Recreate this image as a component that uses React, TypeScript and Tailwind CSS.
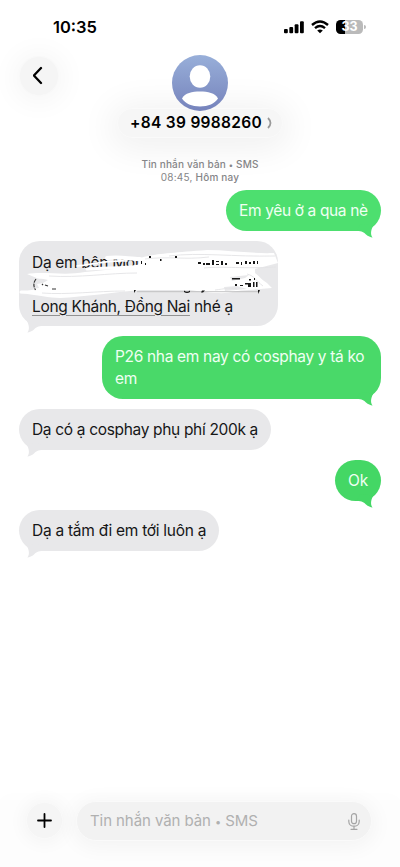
import type { ReactNode } from "react";

type BubbleProps = { side: "in" | "out"; className: string; tail?: string; children: ReactNode };

function Bubble({ side, className, tail = "#e8e8ea", children }: BubbleProps) {
  const out = side === "out";
  return (
    <div
      className={`relative whitespace-nowrap rounded-[21px] px-[13px] py-[9.5px] text-[15.5px] leading-[22px] ${
        out ? "self-end text-[#effff2]" : "self-start bg-[#e8e8ea] text-[#161617]"
      } ${className}`}
    >
      <svg
        className={`absolute -bottom-[7px] ${out ? "right-[7px]" : "left-[7px] -scale-x-100"}`}
        width="20"
        height="16"
        viewBox="0 0 20 16"
      >
        <path d="M3 8.8 C8 9 10 10.5 12 12.5 C14 14.3 16.5 15.3 18.7 15.6 C16.6 13.5 16.2 8.5 19.5 3.5 L6 2 Z" fill={tail} />
      </svg>
      <div className="relative">{children}</div>
    </div>
  );
}

function Scribble() {
  return (
    <svg className="absolute left-0 top-0" width="268" height="85" viewBox="0 0 268 85">
      <path
        d="M8 33 C25 30 45 35 66 31 C90 29 101 27 119 25 L121 17 C134 13 150 12 188 9 C210 9 235 13 255 12 L259 22 L236 28 L236 32 C241 36 243 39 248 42 L253 47 L230 49 C217 49 211 53 198 52 C188 52 181 50 171 49 L121 49 C95 51 65 56 41 57 C30 57 20 54 0 52 L17 48 L13 44 L20 38 Z"
        fill="white"
      />
      <path d="M14 39 C18 37 24 38 29 39 L24 42 L18 43 L20 47 L13 48 Z M211 36 L230 34 L226 37 L213 40Z M205 46 L218 45 L228 48 L206 50Z" fill="#e8e8ea" />
      <g fill="none" stroke="#fff" strokeLinecap="round" strokeLinejoin="round">
        <path d="M88 17 C101 15 110 18 121 18" strokeWidth="4" />
        <path d="M58 25 C72 24 86 19 108 20" strokeWidth="1.7" />
        <path d="M68 28 C86 26 100 28 121 25" strokeWidth="3" />
        <path d="M2 51 C18 51 28 50 45 49" strokeWidth="3" />
      </g>
      <g fill="none" stroke="#e3e3e5" strokeWidth="0.9">
        <path d="M150 15 C180 11 215 16 256 15 M185 27 C205 25 225 28 257 26 M23 52 C48 54 78 50 106 50" />
        <path d="M228 33 C236 35 237 40 244 45 M196 49 C205 48 212 46 218 48 M126 18 C150 15 165 19 190 16 M30 35 C60 37 90 32 118 32" />
        <path d="M118 50.7 H241" stroke="#bcbcbe" />
      </g>
      <g fill="#171717">
        <path d="M130 15h2v2h-2z M141 18h1.5v2h-1.5z M156 15h2v2h-2z M122 20h1v3h-1z M126 22h1v2h-1z" />
        <path d="M179 21h3v2h-3z M184 22h2v2h-2z M187 22h4v2h-4z M193 19h2v5h-2z M197 20h3v1h-3z M197 23h3v1h-3z M202 20h2v4h-2z M206 22h2v2h-2z M217 21h3v2h-3z M222 21h1v3h-1z M226 20h2v3h-2z M230 21h2v2h-2z M234 20h2v3h-2z M238 20h1v3h-1z" />
        <path d="M213 37h8v1.5h-8z M216 43h2v2h-2z M221 44h3v1h-3z M226 42h4v1.5h-4z M230 38h2v1.5h-2z M235 37h1v2h-1z M229 42h3v4h-3z M234 41h1.5v5h-1.5z M237 41h1.5v5h-1.5z" />
        <path d="M165 49.5q3 2.5 6 0v1.5q-3 2-6 0z M183 49.5l3 0-2 2h-2z M239 49h2l-2 4z M115 49h2l-2 3z" />
      </g>
      <path d="M17 38 Q13 43 16.5 49 M23 43l1 1 M26 44l3 1 M33 48h5" fill="none" stroke="#343434" strokeWidth="1.2" strokeDasharray="4 1" />
    </svg>
  );
}

function StatusBar() {
  return (
    <div className="flex h-[54px] items-center pl-[53px] pr-[34px]">
      <span className="text-[16.5px] font-semibold">10:35</span>
      <div className="ml-auto flex items-center gap-[7px]">
        <svg width="20" height="14" viewBox="0 0 21 14">
          <rect x="0" y="9" width="4" height="4.5" rx="1.1" />
          <rect x="5.6" y="7" width="4" height="6.5" rx="1.1" />
          <rect x="11.2" y="4" width="4" height="9.5" rx="1.1" />
          <rect x="16.8" y="1" width="4" height="12.5" rx="1.1" />
        </svg>
        <svg width="18" height="14" viewBox="0 0 18 14" fill="none" stroke="black" strokeWidth="2.4">
          <path d="M1 5 Q9-2 17 5 M4 8.2 Q9 4 14 8.2" />
          <path d="M6.2 10.5 Q9 8.3 11.8 10.5 L9 13.2Z" fill="black" stroke="none" />
        </svg>
        <div className="flex items-center">
          <div className="flex h-[14px] w-[27px] items-center justify-center rounded-[4.5px] bg-[linear-gradient(90deg,#000_33%,#bababa_33%)] text-[12.5px] font-bold leading-none text-white">33</div>
          <span className="ml-px h-[4px] w-[2px] rounded-r-full bg-[#bababa]" />
        </div>
      </div>
    </div>
  );
}

export default function App() {
  return (
    <main className="flex h-[867px] w-[400px] flex-col overflow-hidden bg-white font-['Inter','Liberation_Sans',sans-serif] text-black">
      <StatusBar />
      <header className="flex h-[85px] items-start">
        <button className="ml-[19px] mt-[2px] flex size-[40px] shrink-0 items-center justify-center rounded-full border border-[#f9f9f9] bg-[#f5f5f5] shadow-[0_2px_28px_5px_rgba(0,0,0,0.045)]">
          <svg width="12" height="20" viewBox="0 0 12 20" fill="none" stroke="black" strokeWidth="2.3" strokeLinecap="round" strokeLinejoin="round">
            <path d="M8 2 .9 9.5 8 17" />
          </svg>
        </button>
        <div className="ml-[58px] flex w-[166px] flex-col items-center">
          <svg className="relative z-10 mt-px shrink-0" width="56" height="56" viewBox="0 0 56 56">
            <defs>
              <linearGradient id="avatar" x1="0" y1="0" x2="0" y2="1">
                <stop stopColor="#98afd9" />
                <stop offset="1" stopColor="#7683bc" />
              </linearGradient>
            </defs>
            <circle cx="28" cy="28" r="28" fill="url(#avatar)" />
            <ellipse cx="28" cy="21.5" rx="10.3" ry="11.2" fill="white" />
            <path d="M10 43.5 C13 38 20 36.5 28 36.5 S43 38 46 43.5 C43 48.5 36 51.5 28 51.5 S13 48.5 10 43.5Z" fill="white" />
          </svg>
          <div className="-mt-[3px] flex h-[30px] w-[166px] shrink-0 items-center justify-center gap-[5px] whitespace-nowrap rounded-full border border-[#fafafa] bg-[#f6f6f6] pb-px pl-[2px] text-[15.5px] font-semibold shadow-[0_4px_34px_8px_rgba(0,0,0,0.06)]">
            <span className="tracking-[0.3px]">+84 39 9988260</span>
            <svg width="5" height="12" viewBox="0 0 5 12" fill="none" stroke="#999" strokeWidth="1.8">
              <path d="M1 1q5 5 0 10" />
            </svg>
          </div>
        </div>
      </header>
      <div className="flex h-[51px] flex-col items-center pt-[19px] text-[10px] leading-[13px] text-[#858587]">
        <span className="h-[13px] font-medium tracking-[0.15px]">Tin nhắn văn bản <span className="text-[8px] leading-none">•</span> SMS</span>
        <span className="h-[13px] tracking-[0.2px]">08:45, <span className="font-medium">Hôm nay</span></span>
      </div>
      <section className="flex flex-1 flex-col gap-[10px] px-[19px]">
        <Bubble side="out" tail="#4ddf6f" className="w-[155px] bg-[#4ddf6f] tracking-[-0.36px]">Em yêu ở a qua nè</Bubble>
        <Bubble side="in" className="h-[85px] w-[259px] tracking-[-0.31px]">
          <div className="pt-px">Dạ em bên Mot</div>
          <div className="h-[22px]" />
          <div><span className="underline decoration-[#929292] decoration-1 underline-offset-[3px]">Long Khánh, Đồng Nai</span> nhé ạ</div>
          <div className="absolute -left-[13px] -top-[9.5px]"><Scribble /></div>
        </Bubble>
        <Bubble side="out" tail="#49d969" className="w-[279px] bg-[#49d969] tracking-[-0.33px]">P26 nha em nay có cosphay y tá ko<br />em</Bubble>
        <Bubble side="in" className="w-[252px] tracking-[-0.33px]">Dạ có ạ cosphay phụ phí 200k ạ</Bubble>
        <Bubble side="out" tail="#44d765" className="h-[41px] w-[46px] bg-[#44d765]">Ok</Bubble>
        <Bubble side="in" className="-mt-px w-[200px] tracking-[-0.27px]">Dạ a tắm đi em tới luôn ạ</Bubble>
      </section>
      <footer className="flex h-[67px] items-start bg-[#fdfdfd] pl-[26px] shadow-[0_-3px_18px_4px_rgba(0,0,0,0.008)]">
        <button className="mt-[2px] flex size-[37px] items-center justify-center rounded-full border border-[#fafafa] bg-[#f5f5f5] shadow-[0_1px_18px_3px_rgba(0,0,0,0.04)]">
          <svg width="15" height="15" viewBox="0 0 15 15" stroke="black" strokeWidth="1.8" strokeLinecap="round"><path d="M7.5 1v13 M1 7.5h13" /></svg>
        </button>
        <div className="ml-[13px] mt-px flex h-[40px] w-[296px] items-center justify-between rounded-full border border-[#fafafa] bg-[#f2f2f2] pl-[13px] pr-[11px] text-[15px] text-[#b0b0b0] shadow-[0_3px_20px_4px_rgba(0,0,0,0.04)]">
          <span className="tracking-[-0.08px]">Tin nhắn văn bản <span className="text-[11px]">•</span> SMS</span>
          <svg width="12" height="17" viewBox="0 0 12 17" fill="none" stroke="#a5a5a5" strokeWidth="1.2" strokeLinecap="round">
            <rect x="3.5" y=".7" width="5" height="10" rx="2.5" />
            <path d="M.8 7v1.4c0 6.4 10.4 6.4 10.4 0V7 M6 13.3v3 M3 16.3h6" />
          </svg>
        </div>
      </footer>
    </main>
  );
}
